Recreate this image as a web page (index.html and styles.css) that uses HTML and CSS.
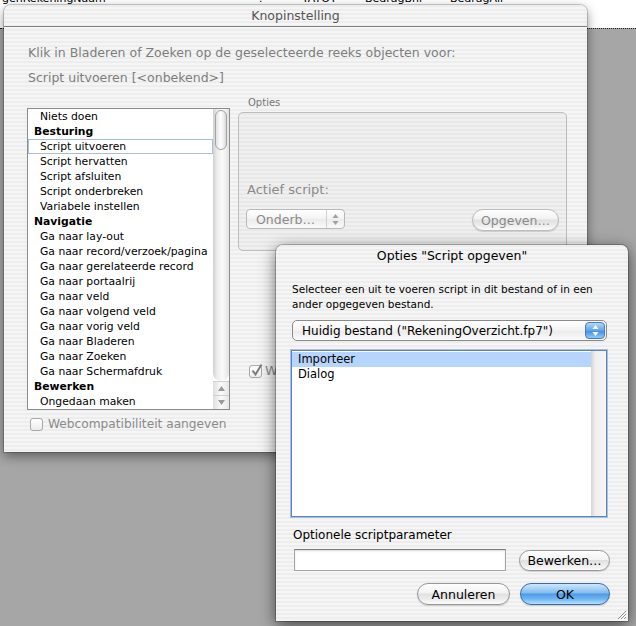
FILE: index.html
```html
<!DOCTYPE html>
<html lang="nl">
<head>
    <meta charset="UTF-8">
    <meta name="viewport" content="width=device-width, initial-scale=1.0">
    <title>Knopinstelling</title>
    <link rel="stylesheet" href="styles.css">
</head>
<body>

    <div class="sheet">
        <span class="col col-naam">genRekeningNaam</span>
        <span class="col col-q">?</span>
        <span class="col col-tatot">TATOT</span>
        <span class="col col-bnl">BedragBnl</span>
        <span class="col">BedragAll</span>
    </div>
    <div class="desk"></div>

    <div class="win win-main">
        <div class="titlebar">Knopinstelling</div>
        <div class="main-body">
            <p class="lead">Klik in Bladeren of Zoeken op de geselecteerde reeks objecten voor:</p>
            <p class="lead lead-2">Script uitvoeren [&lt;onbekend&gt;]</p>

            <div class="main-row">
                <div class="steps">
                    <ul class="step-list">
                        <li>Niets doen</li>
                        <li class="head">Besturing</li>
                        <li class="current">Script uitvoeren</li>
                        <li>Script hervatten</li>
                        <li>Script afsluiten</li>
                        <li>Script onderbreken</li>
                        <li>Variabele instellen</li>
                        <li class="head">Navigatie</li>
                        <li>Ga naar lay-out</li>
                        <li>Ga naar record/verzoek/pagina</li>
                        <li>Ga naar gerelateerde record</li>
                        <li>Ga naar portaalrij</li>
                        <li>Ga naar veld</li>
                        <li>Ga naar volgend veld</li>
                        <li>Ga naar vorig veld</li>
                        <li>Ga naar Bladeren</li>
                        <li>Ga naar Zoeken</li>
                        <li>Ga naar Schermafdruk</li>
                        <li class="head">Bewerken</li>
                        <li>Ongedaan maken</li>
                    </ul>
                    <div class="vscroll">
                        <div class="track"><div class="thumb"></div></div>
                        <div class="arrow">
                            <svg width="7" height="5" viewBox="0 0 7 5"><polygon points="3.5,0 7,5 0,5" fill="#9a9a9a"/></svg>
                        </div>
                        <div class="arrow">
                            <svg width="7" height="5" viewBox="0 0 7 5"><polygon points="0,0 7,0 3.5,5" fill="#9a9a9a"/></svg>
                        </div>
                    </div>
                </div>

                <div class="options">
                    <div class="group-label">Opties</div>
                    <div class="group">
                        <div class="group-text">Actief script:</div>
                        <div class="group-row">
                            <div class="popup popup-off">
                                <span>Onderb…</span>
                                <span class="stepper">
                                    <svg width="7" height="11" viewBox="0 0 7 11"><polygon points="3.5,0 6.5,4 0.5,4" fill="#a0a0a0"/><polygon points="0.5,7 6.5,7 3.5,11" fill="#a0a0a0"/></svg>
                                </span>
                            </div>
                            <button class="pill pill-off">Opgeven…</button>
                        </div>
                    </div>
                    <div class="check check-w">
                        <span class="box">
                            <svg width="13" height="13" viewBox="0 0 13 13"><path d="M2.5 6.5 L5.5 10.5 L11.5 0.5" fill="none" stroke="#7c7c7c" stroke-width="2"/></svg>
                        </span>W
                    </div>
                </div>
            </div>

            <div class="check check-web"><span class="box"></span>Webcompatibiliteit aangeven</div>
        </div>
    </div>

    <div class="win win-sub">
        <div class="titlebar">Opties "Script opgeven"</div>
        <div class="sub-body">
            <p class="intro">Selecteer een uit te voeren script in dit bestand of in een<br>ander opgegeven bestand.</p>
            <div class="popup file-popup">
                <span>Huidig bestand ("RekeningOverzicht.fp7")</span>
                <span class="stepper-blue">
                    <svg width="7" height="11" viewBox="0 0 7 11"><polygon points="3.5,0 6.5,4 0.5,4" fill="#fff"/><polygon points="0.5,7 6.5,7 3.5,11" fill="#fff"/></svg>
                </span>
            </div>
            <div class="scripts">
                <ul class="script-list">
                    <li class="sel">Importeer</li>
                    <li>Dialog</li>
                </ul>
                <div class="empty-scroll"></div>
            </div>
            <div class="param-label">Optionele scriptparameter</div>
            <div class="param-row">
                <div class="field"></div>
                <button class="pill btn-edit">Bewerken…</button>
            </div>
            <div class="actions">
                <button class="pill btn-cancel">Annuleren</button>
                <button class="pill pill-default btn-ok">OK</button>
            </div>
        </div>
        <svg class="grip" width="11" height="11" viewBox="0 0 11 11">
            <path d="M10 2 L2 10 M10 5 L5 10 M10 8 L8 10" stroke="#8c8c8c" stroke-width="1"/>
            <path d="M11 3 L3 11 M11 6 L6 11" stroke="#fff" stroke-width="1"/>
        </svg>
    </div>

</body>
</html>
```

FILE: styles.css
```css
* {
    box-sizing: border-box;
}
body {
    margin: 0;
    width: 636px;
    height: 626px;
    overflow: hidden;
    position: relative;
    background: #fff;
    font-family: "DejaVu Sans", Verdana, sans-serif;
    color: #000;
}

/* spreadsheet behind the windows */
.sheet {
    display: flex;
    margin-top: -8px;
    padding-left: 2px;
    font-size: 11px;
    line-height: 14px;
    white-space: nowrap;
}
.col-naam {
    width: 256px;
}
.col-q {
    width: 44px;
}
.col-tatot {
    width: 63px;
}
.col-bnl {
    width: 85px;
}
.desk {
    position: absolute;
    left: 0;
    right: 0;
    top: 28px;
    bottom: 0;
    background: #a6a6a6;
    border-top: 1px dotted #222;
}

/* windows */
.win {
    position: absolute;
    border-radius: 7px 7px 0 0;
    background: repeating-linear-gradient(#ededed 0, #ededed 2px, #f5f5f5 2px, #f5f5f5 4px);
    box-shadow: 0 0 0 1px rgba(0, 0, 0, 0.18), 0 4px 12px rgba(0, 0, 0, 0.45);
}
.win-main {
    left: 4px;
    top: 5px;
    width: 583px;
    height: 447px;
}
.win-sub {
    left: 276px;
    top: 245px;
    width: 352px;
    height: 376px;
    box-shadow: 0 0 0 1px rgba(0, 0, 0, 0.22), 0 4px 16px rgba(0, 0, 0, 0.6);
}
.titlebar {
    height: 22px;
    line-height: 21px;
    font-size: 12.5px;
    text-align: center;
    border-radius: 7px 7px 0 0;
}
.win-main .titlebar {
    color: #555;
    border-bottom: 1px solid #808080;
}

/* main window */
.main-body {
    padding: 17px 0 0 24px;
}
.lead {
    margin: 0;
    font-size: 12.5px;
    line-height: 18px;
    color: #7d7d7d;
}
.lead-2 {
    margin-top: 7px;
}
.main-row {
    display: flex;
    margin-top: 10px;
    margin-left: -1px;
}
.steps {
    display: flex;
    width: 203px;
    height: 302px;
    margin-top: 11px;
    border: 1px solid #8c8c8c;
    background: #fff;
}
.step-list {
    list-style: none;
    margin: 0;
    padding: 0;
    width: 185px;
    font-size: 10.8px;
}
.step-list li {
    height: 15px;
    line-height: 15px;
    padding-left: 12px;
    white-space: nowrap;
}
.step-list li.head {
    font-weight: bold;
    padding-left: 6px;
}
.step-list li.current {
    box-shadow: inset 0 0 0 1px #a9bedb;
}
.vscroll {
    display: flex;
    flex-direction: column;
    width: 16px;
}
.track {
    flex: 1;
    padding: 1px 2px;
    border-radius: 0 0 8px 8px;
    background: linear-gradient(to right, #cfcfcf, #ececec 25%, #fafafa 60%, #e3e3e3);
}
.thumb {
    height: 40px;
    border: 1px solid #a3a3a3;
    border-radius: 7px;
    background: linear-gradient(to right, #e2e2e2, #fdfdfd 45%, #f2f2f2 70%, #d6d6d6);
}
.arrow {
    height: 14px;
    display: flex;
    align-items: center;
    justify-content: center;
    border-top: 1px solid #d0d0d0;
    background: linear-gradient(to right, #dedede, #fafafa 50%, #e6e6e6);
}

.options {
    width: 329px;
    margin-left: 8px;
}
.group-label {
    padding-left: 10px;
    font-size: 10px;
    line-height: 12px;
    color: #777;
}
.group {
    display: flex;
    flex-direction: column;
    justify-content: flex-end;
    height: 139px;
    margin-top: 3px;
    padding: 0 7px 19px 8px;
    border: 1px solid #bdbdbd;
    border-radius: 5px;
    background: rgba(0, 0, 0, 0.02);
}
.group-text {
    font-size: 13px;
    line-height: 18px;
    color: #8a8a8a;
    margin-bottom: 10px;
}
.group-row {
    display: flex;
    justify-content: space-between;
    align-items: flex-start;
}

.popup {
    display: flex;
    justify-content: space-between;
    align-items: center;
    background: linear-gradient(#ffffff, #f3f3f3 50%, #ebebeb 51%, #fafafa);
}
.popup-off {
    width: 99px;
    height: 20px;
    margin-left: -1px;
    padding-left: 9px;
    border: 1px solid #b8b8b8;
    border-radius: 4px;
    font-size: 12.5px;
    color: #8a8a8a;
}
.stepper {
    display: flex;
    align-items: center;
    justify-content: center;
    width: 18px;
    height: 100%;
    border-left: 1px solid #d0d0d0;
}

.pill {
    height: 22px;
    padding: 0;
    border: 1px solid #979797;
    border-radius: 11px;
    font-family: inherit;
    font-size: 12.5px;
    color: #000;
    background: linear-gradient(#fefefe 0%, #f2f2f2 45%, #e0e0e0 50%, #ececec 75%, #fbfbfb 100%);
    box-shadow: 0 1px 1px rgba(0, 0, 0, 0.15);
}
.pill-off {
    width: 87px;
    color: #8a8a8a;
    border-color: #bcbcbc;
}
.pill-default {
    border-color: #3e6aa8;
    background: linear-gradient(#d0e7fb 0%, #80bcf0 45%, #4e9ae6 50%, #6db6f2 75%, #b7e1fc 100%);
}

.check {
    display: flex;
    align-items: center;
    gap: 5px;
    font-size: 12.2px;
    line-height: 18px;
    color: #8a8a8a;
}
.box {
    width: 13px;
    height: 13px;
    border: 1px solid #a8a8a8;
    border-radius: 3px;
    background: linear-gradient(#fff, #ececec);
    position: relative;
}
.box svg {
    position: absolute;
    left: 0;
    top: -2px;
}
.check-w {
    margin: 111px 0 0 11px;
    gap: 3px;
    font-size: 13px;
}
.check-web {
    margin: 5px 0 0 2px;
}

/* sub window */
.sub-body {
    padding: 15px 21px 0 16px;
}
.intro {
    margin: 0;
    font-size: 10.5px;
    line-height: 15px;
}
.file-popup {
    height: 21px;
    margin-top: 8px;
    padding-left: 9px;
    border: 1px solid #8a8a8a;
    border-radius: 5px;
    font-size: 12px;
}
.stepper-blue {
    display: flex;
    align-items: center;
    justify-content: center;
    width: 20px;
    height: 17px;
    margin-right: 1px;
    border: 1px solid #4a7bbb;
    border-radius: 4px;
    background: linear-gradient(#b2d8f8, #5ea5e9 50%, #3f8ae0 51%, #8fcaf7);
}
.scripts {
    display: flex;
    width: 316px;
    height: 167px;
    margin: 9px 0 0 -1px;
    border: 1px solid #5d83bf;
    box-shadow: 0 0 0 1px #a5c1e8;
    background: #fff;
}
.script-list {
    flex: 1;
    list-style: none;
    margin: 0;
    padding: 1px 0 0;
    font-size: 11.5px;
}
.script-list li {
    height: 15px;
    line-height: 15px;
    padding-left: 6px;
}
.script-list li.sel {
    background: #b6d5fd;
}
.empty-scroll {
    width: 15px;
    background: linear-gradient(to right, #d4d4d4, #efefef 30%, #f6f6f6);
}
.param-label {
    margin-top: 10px;
    padding-left: 1px;
    font-size: 12px;
    line-height: 16px;
}
.param-row {
    display: flex;
    justify-content: space-between;
    align-items: center;
    margin: 6px -3px 0 2px;
}
.field {
    width: 212px;
    height: 22px;
    border: 1px solid #a5a5a5;
    border-top-color: #7d7d7d;
    background: #fff;
    box-shadow: inset 0 1px 2px rgba(0, 0, 0, 0.15);
}
.btn-edit {
    width: 91px;
    height: 21px;
}
.actions {
    display: flex;
    justify-content: flex-end;
    gap: 10px;
    margin: 12px -3px 0 0;
}
.btn-cancel {
    width: 93px;
}
.btn-ok {
    width: 90px;
}
.grip {
    position: absolute;
    right: 1px;
    bottom: 1px;
}
```
